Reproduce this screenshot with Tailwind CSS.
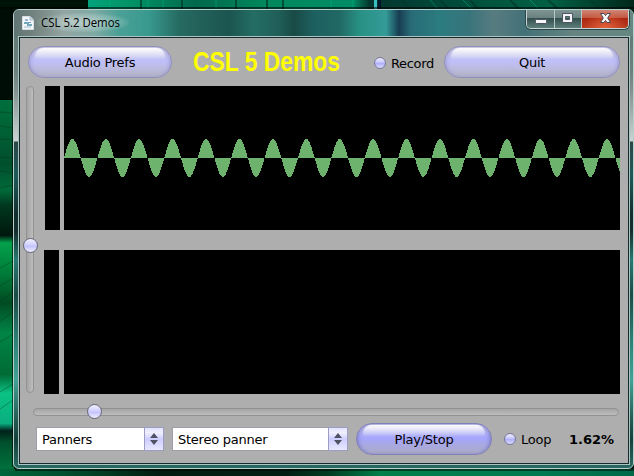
<!DOCTYPE html>
<html lang="en">
<head>
<meta charset="utf-8">
<title>CSL 5.2 Demos</title>
<script src="https://cdn.jsdelivr.net/npm/@tailwindcss/browser@4"></script>
</head>
<body class="relative h-[476px] w-[634px] overflow-hidden bg-[#00150b] font-['DejaVu_Sans',sans-serif] text-[13px] tracking-[-0.25px] text-black">
<!-- Desktop wallpaper -->
<svg class="absolute inset-0" width="634" height="476" aria-hidden="true">
  <defs>
    <linearGradient id="top" x1="0" x2="1">
      <stop offset="0" stop-color="#00a884"/><stop offset=".1" stop-color="#009466"/><stop offset=".22" stop-color="#00684c"/><stop offset=".34" stop-color="#00875b"/><stop offset=".5" stop-color="#008d65"/><stop offset=".53" stop-color="#04342f"/><stop offset=".72" stop-color="#00513c"/><stop offset=".85" stop-color="#006044"/><stop offset="1" stop-color="#00271a"/>
    </linearGradient>
    <linearGradient id="left" x2="0" y2="1">
      <stop offset="0" stop-color="#00703d"/><stop offset=".17" stop-color="#004f2c"/><stop offset=".24" stop-color="#006a39"/><stop offset=".28" stop-color="#00371f"/><stop offset=".36" stop-color="#00180e"/><stop offset=".38" stop-color="#03a04c"/><stop offset=".46" stop-color="#007c38"/><stop offset=".54" stop-color="#004b22"/><stop offset=".62" stop-color="#008547"/><stop offset=".73" stop-color="#006a35"/><stop offset=".78" stop-color="#0ac283"/><stop offset=".86" stop-color="#0aae80"/><stop offset=".88" stop-color="#00211a"/><stop offset=".91" stop-color="#00502c"/><stop offset="1" stop-color="#007a40"/>
    </linearGradient>
    <linearGradient id="bottom" x1="0" x2="1">
      <stop offset="0" stop-color="#00663a"/><stop offset=".13" stop-color="#00482a"/><stop offset=".25" stop-color="#001c10"/><stop offset=".45" stop-color="#001e12"/><stop offset=".52" stop-color="#003d22"/><stop offset=".6" stop-color="#00804a"/><stop offset=".85" stop-color="#007a50"/><stop offset="1" stop-color="#006a48"/>
    </linearGradient>
  </defs>
  <rect width="88" height="12" fill="#001309"/>
  <rect x="72" width="562" height="10" fill="url(#top)"/>
  <rect x="72" width="16" height="10" fill="#001309"/>
  <g stroke="#00392b" stroke-width="2" opacity=".7"><path d="M141 0V9M182 0V9M236 0V9M267 0V9M283 0V9M402 0l8 9M440 0l9 9M470 0l8 9M510 0l9 9M548 0l10 9M590 0l10 9"/></g>
  <g stroke="#00b388" opacity=".5"><path d="M110 0V9M148 0V9M163 0V9M216 0V9M331 0V9M353 0V9M430 0l8 9M463 0l9 9M530 0l9 9"/></g>
  <path d="M375.500 0V9" stroke="#39bec1" stroke-width="3"/>
  <path d="M379.500 0V9" stroke="#03162c" stroke-width="3"/>
  <path d="M0 8H634" stroke="#000" stroke-width="2" opacity=".55"/>
  <rect y="100" width="14" height="376" fill="url(#left)"/>
  <rect y="9" width="14" height="91" fill="#000c06"/>
  <g stroke="#00331d" opacity=".35"><path d="M0 112l13 1M0 126l13 2M0 139l13 1M0 157l13 1M0 171l13 2M0 188l13-3M0 268l13-7M0 286l13-8M0 301l13-9M0 321l13-9M0 342l13-8M0 392l13-8M0 409l13-9"/></g>
  <rect y="469" width="634" height="7" fill="url(#bottom)"/>
  <rect x="12" y="12" width="1" height="455" fill="#000" opacity=".6"/>
  <rect x="15" y="469" width="619" height="2" fill="#000" opacity=".5"/>
</svg>

<!-- Application window -->
<main class="relative mt-[9px] ml-[13px] flex h-[460px] w-[621px] flex-col overflow-hidden rounded-[6px] border border-[#b5d0cd] bg-[linear-gradient(180deg,#5b7773_0,#6c807d_60px,#81908e_80px,#cbd4d3_131px,#2b4746_132px,#1e5a59_165px,#122e2d_205px,#14302e_222px,#277a72_250px,#1b4b45_285px,#2d8075_330px,#42a195_370px,#235a51_410px,#16403a_430px,#2a6d65_460px)]">
  <header class="flex h-[27px] shrink-0 bg-[linear-gradient(90deg,#5f7472_0,#73837f_20px,#93a5a2_50px,#7faaa4_80px,#4ba096_105px,#38998e_135px,#266b62_165px,#215f58_190px,#1c554f_215px,#236d65_240px,#205e58_265px,#194a45_280px,#1d6060_300px,#216863_325px,#289083_345px,#349b97_372px,#183d52_385px,#286b76_397px,#2b7c80_425px,#39747b_455px,#577c80_480px,#437177_510px,#668381_560px,#648781_620px)]">
    <svg class="mt-[6px] ml-[8px] shrink-0" width="12" height="14" viewBox="0 0 12 14">
      <path d="M.5.500H8L11.500 4V13.500H.500Z" fill="#f3f7fa" stroke="#d5dee4"/>
      <path d="M8 .500V4H11.500" fill="#cbd8e4" stroke="#a6b8c9"/>
      <path d="M3 3H6V5H3Z" fill="#97b6d8"/><path d="M2 7H7M5 9H10" stroke="#6fa9ba" stroke-width="2"/><path d="M2 11H9" stroke="#a5bccf"/><path d="M7 6.500H9" stroke="#7594cf"/>
    </svg>
    <div class="mt-[3px] ml-[3px] h-[19px] w-[92px] rounded-full bg-[radial-gradient(ellipse,rgba(220,235,233,.48)_20%,rgba(200,225,222,.22)_60%,transparent_75%)]">
      <svg width="92" height="19" class="overflow-visible tracking-normal"><text x="4" y="14" font-family="Open Sans, sans-serif" font-size="12" textLength="79" lengthAdjust="spacingAndGlyphs">CSL 5.2 Demos</text></svg>
    </div>
    <!-- Window controls -->
    <div class="mt-[-1px] mr-[4px] ml-auto flex h-[20px] w-[103px] overflow-hidden rounded-b-[5px] border border-t-0 border-[#c7d4d1] shadow-[0_0_0_1px_#29474a]">
      <div class="flex w-[28px] justify-center border-r border-[#b8c8c6] bg-[linear-gradient(180deg,#829795_0,#6a8380_45%,#344f4f_50%,#5d7f7b_100%)]">
        <svg width="27" height="19"><rect x="8.500" y="10.500" width="11" height="4" rx="1" fill="#f6f6f6" stroke="#4b5564"/></svg>
      </div>
      <div class="flex w-[27px] justify-center border-r border-[#b8c8c6] bg-[linear-gradient(180deg,#829795_0,#6a8380_45%,#344f4f_50%,#5d7f7b_100%)]">
        <svg width="26" height="19"><path fill="#f4f4f6" stroke="#4b5564" fill-rule="evenodd" d="M7.500 4.500H17.500V13.500H7.500ZM10.500 7.500V10.500H14.500V7.500Z"/></svg>
      </div>
      <div class="flex flex-1 justify-center bg-[radial-gradient(ellipse_at_bottom,rgba(247,119,75,.65)_0,transparent_65%),linear-gradient(180deg,#d38d7d_0,#c05842_45%,#ac2711_50%,#b93b20_100%)]">
        <svg width="46" height="19"><path d="M18.500 4.500H22L23.500 6.500 25 4.500H28.500L25.700 9 28.500 13.500H25L23.500 11.500 22 13.500H18.500L21.300 9Z" fill="#f5f5f5" stroke="#4a4652" stroke-width="1"/></svg>
      </div>
    </div>
  </header>

  <section class="mx-[5px] box-border flex h-[427px] w-[610px] shrink-0 flex-col border border-[#152b2b] bg-[#aeaeae] shadow-[0_0_0_1px_#a9c4c1]">
    <div class="mt-[8px] flex h-[32px] shrink-0 items-center pl-[8px]">
      <div class="relative flex h-[32px] w-[144px] shrink-0 items-center justify-center rounded-full border border-[#9090bd] bg-[linear-gradient(180deg,#d7d7e8_0,#c4c4f2_32%,#bfbffa_48%,#bbbbdf_72%,#b1b1c5_100%)] shadow-[inset_3px_0_4px_-2px_#9c9ccf,inset_-3px_0_4px_-2px_#9c9ccf]">
        <i class="absolute inset-x-[6px] top-[1px] h-[11px] rounded-t-[10px] rounded-b-[3px] bg-gradient-to-b from-white/95 to-white/5"></i>
        <span class="relative pt-[2px]">Audio Prefs</span>
      </div>
      <svg class="ml-[21px] shrink-0 overflow-visible tracking-normal" width="150" height="32"><text x="0" y="25" fill="#ffff00" font-family="Liberation Sans, sans-serif" font-weight="bold" font-size="27" textLength="147" lengthAdjust="spacingAndGlyphs">CSL 5 Demos</text></svg>
      <i class="mt-[2px] ml-[31px] h-[12px] w-[12px] shrink-0 rounded-full border border-[#77779a] bg-[linear-gradient(180deg,#efeffc_0,#ccccff_40%,#b0b0fb_55%,#dedeff_100%)]"></i>
      <span class="mt-[3px] ml-[5px] w-[53px] shrink-0 tracking-[-0.35px]">Record</span>
      <div class="relative flex h-[32px] w-[176px] shrink-0 items-center justify-center rounded-full border border-[#9090bd] bg-[linear-gradient(180deg,#d7d7e8_0,#c4c4f2_32%,#bfbffa_48%,#bbbbdf_72%,#b1b1c5_100%)] shadow-[inset_3px_0_4px_-2px_#9c9ccf,inset_-3px_0_4px_-2px_#9c9ccf]">
        <i class="absolute inset-x-[6px] top-[1px] h-[11px] rounded-t-[10px] rounded-b-[3px] bg-gradient-to-b from-white/95 to-white/5"></i>
        <span class="relative pt-[2px]">Quit</span>
      </div>
    </div>

    <div class="mt-[8px] flex h-[308px] shrink-0">
      <div class="relative ml-[6px] h-[307px] w-[8px] rounded-full border border-[#929292] bg-gradient-to-r from-[#a5a5a5] to-[#bdbdbd]">
        <i class="absolute top-[151px] left-[-4px] h-[15px] w-[15px] rounded-full border-[1.5px] border-[#666675] bg-[linear-gradient(180deg,#f1f1fe_0,#d0d0ff_45%,#c3c3fb_55%,#eeeeff_100%)]"></i>
      </div>
      <div class="ml-[10px] flex flex-col gap-[20px]">
        <div class="flex h-[144px]">
          <div class="ml-[1px] w-[15px] bg-black"></div>
          <svg class="ml-[4px] bg-black" width="556" height="144" shape-rendering="crispEdges"><path id="wave" fill="#6db36d"/></svg>
        </div>
        <div class="flex h-[144px]">
          <div class="w-[15px] bg-black"></div>
          <div class="ml-[5px] w-[556px] bg-black"></div>
        </div>
      </div>
    </div>

    <div class="relative mt-[14px] ml-[13px] h-[8px] w-[586px] shrink-0 rounded-full border border-[#929292] bg-gradient-to-b from-[#a5a5a5] to-[#bdbdbd]">
      <i class="absolute top-[-5px] left-[53px] h-[15px] w-[15px] rounded-full border-[1.5px] border-[#666675] bg-[linear-gradient(180deg,#f1f1fe_0,#d0d0ff_45%,#c3c3fb_55%,#eeeeff_100%)]"></i>
    </div>

    <div class="mt-[7px] flex h-[32px] shrink-0 items-center pl-[16px]">
      <div class="flex h-[24px] w-[128px] shrink-0 border border-[#9e9ea8] bg-white">
        <span class="flex-1 pl-[5px] leading-[24px]">Panners</span>
        <div class="-my-px -mr-px flex w-[20px] items-center justify-center border border-[#9c9cc4] bg-[linear-gradient(180deg,#e2e2fc_0,#f0f0ff_22%,#cdcdff_50%,#e8e8ff_100%)]"><svg width="8" height="12"><path d="M4 0L8 5H0ZM0 7H8L4 12Z" fill="#515164"/></svg></div>
      </div>
      <div class="ml-[8px] flex h-[24px] w-[176px] shrink-0 border border-[#9e9ea8] bg-white">
        <span class="flex-1 pl-[5px] leading-[24px]">Stereo panner</span>
        <div class="-my-px -mr-px flex w-[20px] items-center justify-center border border-[#9c9cc4] bg-[linear-gradient(180deg,#e2e2fc_0,#f0f0ff_22%,#cdcdff_50%,#e8e8ff_100%)]"><svg width="8" height="12"><path d="M4 0L8 5H0ZM0 7H8L4 12Z" fill="#515164"/></svg></div>
      </div>
      <div class="relative ml-[8px] flex h-[32px] w-[136px] shrink-0 items-center justify-center rounded-full border border-[#8080b9] bg-[linear-gradient(180deg,#cdcdeb_0,#b2b2f5_32%,#a5a5ff_48%,#a9a9df_72%,#aaaac6_100%)] shadow-[inset_3px_0_4px_-2px_#7c7cc5,inset_-3px_0_4px_-2px_#7c7cc5]">
        <i class="absolute inset-x-[6px] top-[1px] h-[11px] rounded-t-[10px] rounded-b-[3px] bg-gradient-to-b from-white/95 to-white/5"></i>
        <span class="relative pt-[2px]">Play/Stop</span>
      </div>
      <i class="ml-[12px] h-[12px] w-[12px] shrink-0 rounded-full border border-[#77779a] bg-[linear-gradient(180deg,#efeffc_0,#ccccff_40%,#b0b0fb_55%,#dedeff_100%)]"></i>
      <span class="ml-[5px] w-[48px] shrink-0 pt-[2px]">Loop</span>
      <span class="pt-[2px] font-bold tracking-normal">1.62%</span>
    </div>
  </section>
</main>
<script>
  // Oscilloscope trace, filled to the center line one column at a time
  let d = "";
  for (let x = 0; x < 556; x++) {
    const h = Math.round(19 * Math.sin((x + 0.5) / 33.42 * 2 * Math.PI));
    d += `M${x} 72h1v${-h}h-1Z`;
  }
  document.getElementById("wave").setAttribute("d", d);
</script>
</body>
</html>
